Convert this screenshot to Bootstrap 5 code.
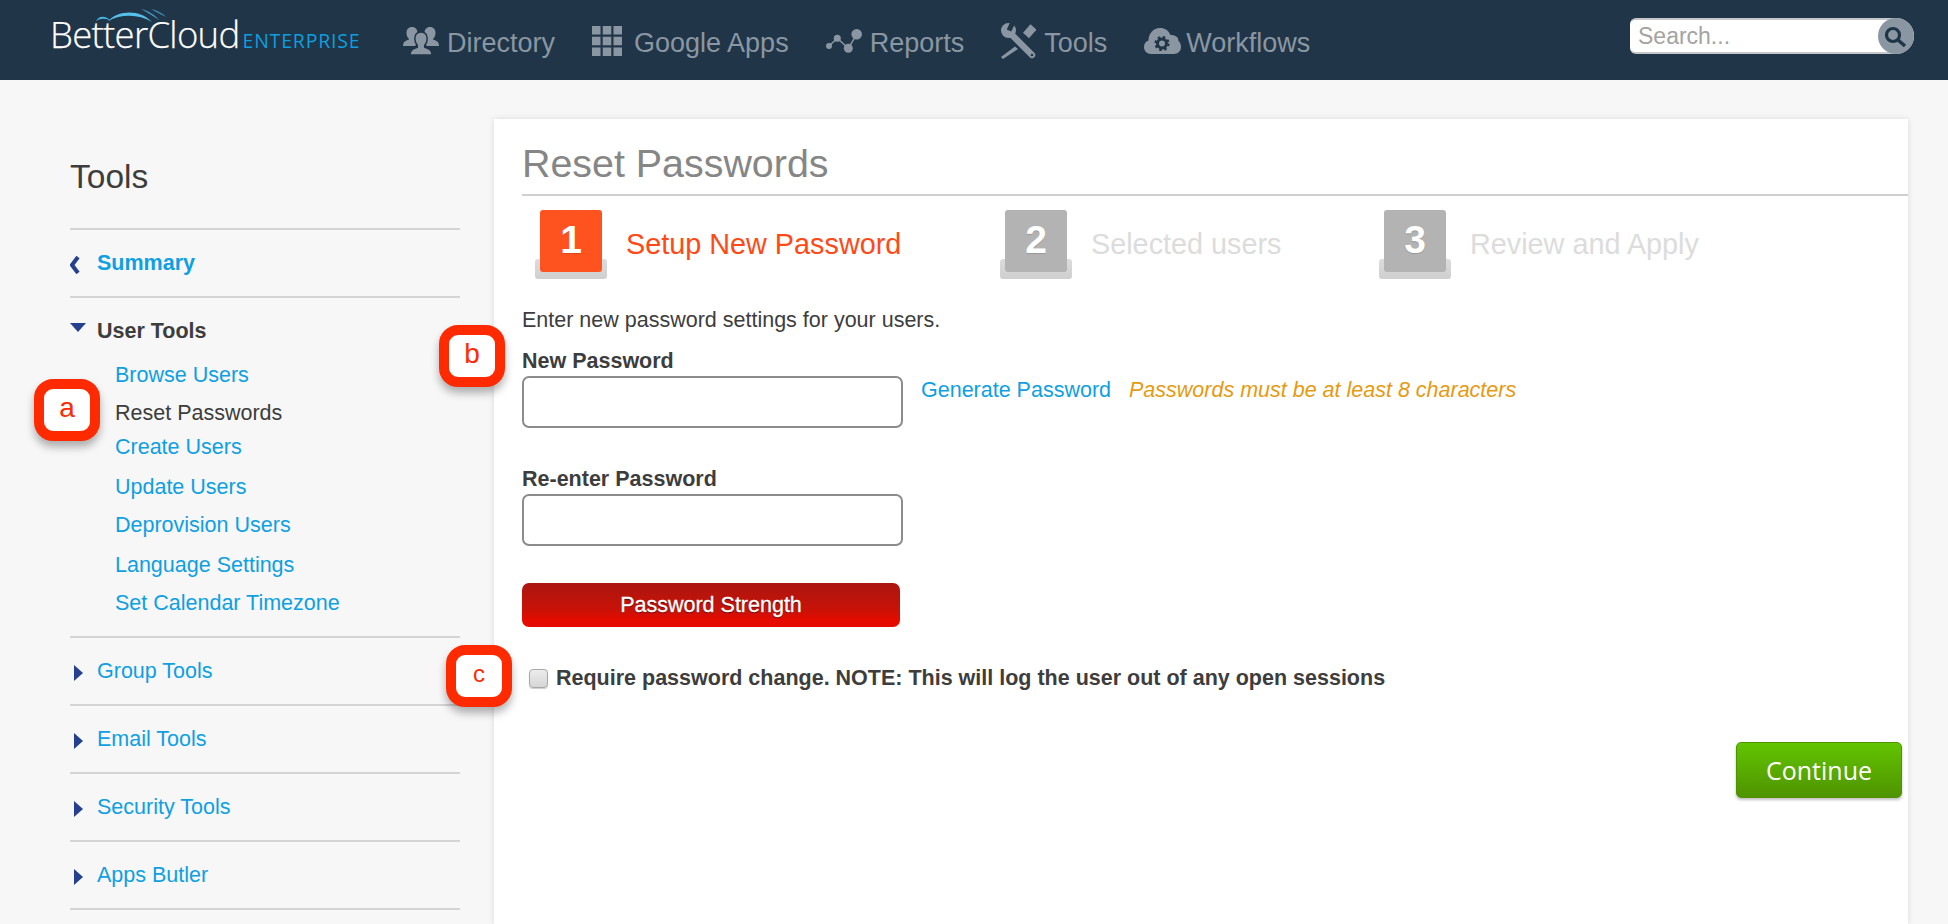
<!DOCTYPE html>
<html lang="en">
<head>
<meta charset="utf-8">
<title>Reset Passwords</title>
<link rel="stylesheet" href="https://cdn.jsdelivr.net/npm/bootstrap@5.3.0/dist/css/bootstrap.min.css">
<style>
html,body{height:924px;overflow:hidden}
body{background:#f7f7f7;font-family:"Liberation Sans",Arial,sans-serif;color:#3d3d3d;font-size:21.5px}
a{text-decoration:none;color:#0f9fe3}
.topbar{height:80px;background:#203548;padding:0 34px 0 50px}
.brand{width:353px;height:80px;position:relative;padding-top:11px;line-height:1;flex:none;white-space:nowrap}
.brand-main{font-family:"Open Sans",sans-serif;font-weight:300;font-size:36.5px;color:#fff;letter-spacing:-.7px;line-height:46px;-webkit-text-stroke:.25px #fff}
.brand-sub{font-family:"Open Sans",sans-serif;font-weight:400;font-size:19.5px;color:#0d9fdf;letter-spacing:.8px;margin-left:3px}
.swoosh{position:absolute;left:45px;top:8px}
.menu-item{color:#8a97a3;font-size:27px;line-height:80px;margin-right:37px;padding-top:5px}
.menu-item:hover{color:#8a97a3}
.menu-item svg{margin-top:-3px;flex:none}
.gap-a{margin-right:8px}
.gap-b{margin-right:12px}
.gap-c{margin-right:7px}
.gap-d{margin-right:5px}
.finder{width:284px;height:36px;background:#fff;border-top:2px solid #c4c6c8;border-bottom:2px solid #c4c6c8;border-radius:6px 18px 18px 6px;position:relative;margin-top:-8px}
.finder input{border:0;outline:0;background:none;width:240px;height:32px;font-size:23px;padding:0 0 0 8px;color:#999;font-family:"Liberation Sans",Arial,sans-serif}
.finder input::placeholder{color:#a3a3a3;opacity:1}
.finder-btn{position:absolute;right:0;top:-2px;width:36px;height:36px;border-radius:50%;background:#8a97a3}
.page-area{padding:39px 40px 0 70px}
.sidenav{width:390px;flex:none;margin-right:34px}
.sidenav-title{font-size:33.500px;font-weight:400;height:109px;margin:0;padding-top:38px;line-height:40px;color:#3d3d3d}
.side-group{border-top:2px solid #d4d4d4;margin:0;height:68px;display:flex;align-items:center;padding-top:1px}
.side-group.open{height:340px;display:block;padding-top:20px}
.side-group.tail{height:14px}
.side-caret{width:27px;flex:none;display:inline-block}
.side-head{display:flex;align-items:center;height:26px}
.sub-list{display:flex;flex-direction:column;padding:18px 0 0 45px;margin:0;list-style:none;line-height:26px}
.sub-list li:nth-child(1){margin-bottom:12px}
.sub-list li:nth-child(2){margin-bottom:8px}
.sub-list li:nth-child(3){margin-bottom:14px}
.sub-list li:nth-child(4){margin-bottom:12px}
.sub-list li:nth-child(5){margin-bottom:14px}
.sub-list li:nth-child(6){margin-bottom:12px}
.panel-box{width:1414px;height:805px;flex:none;background:#fff;box-shadow:0 0 6px rgba(0,0,0,.12);padding:0 0 0 28px}
.panel-title{font-size:39.400px;color:#868686;font-weight:400;height:77px;line-height:44px;padding-top:22px;margin:0;border-bottom:2px solid #cfcfcf}
.steps{height:112px;padding-top:14px}
.step{align-items:flex-start}
.step-num{width:72px;height:69px;position:relative;flex:none;margin-left:13px}
.step-face{position:absolute;left:5px;top:0;width:62px;height:62px;border-radius:3px;color:#fff;font-weight:700;font-size:39px;line-height:60px;text-align:center;z-index:1;text-shadow:0 1px 1px rgba(0,0,0,.15)}
.step-base{position:absolute;left:0;bottom:0;width:72px;height:20px;border-radius:3px;background:linear-gradient(#dcdcdc,#cfcfcf)}
.step-text{font-size:28.800px;line-height:32px;margin:18px 0 0 19px}
.step-on .step-face{background:#ff531f}
.step-on .step-text{color:#ff4a17}
.step-off .step-face{background:#b3b3b3}
.step-off .step-text{color:#dcdcdc}
.step-a{width:465px}
.step-b{width:379px}
.intro{margin:0;line-height:24px;height:41px}
.field-label{font-weight:700;line-height:24px;margin:0 0 3px;display:block}
.field{width:381px;height:52px;border:2px solid #8c8c8c;border-radius:7px;background:#fff;flex:none}
.field-row{margin-bottom:39px}
.gen-link{margin-left:18px;line-height:24px;padding-top:2px}
.hint{margin-left:18px;color:#e69a10;font-style:italic;line-height:24px;padding-top:2px}
.strength{width:378px;height:44px;border:0;border-radius:7px;background:linear-gradient(#ab1611,#c81207 60%,#e60b00 85%);color:#fff;font-size:21.500px;text-shadow:0 1px 1px rgba(60,0,0,.8);margin-top:-2px;display:block;-webkit-text-stroke:.3px #fff}
.req{margin-top:39px;padding-left:7px;line-height:24px;font-weight:700}
.req input{appearance:none;width:19px;height:19px;margin:0 8px 0 0;flex:none;background:linear-gradient(#ececec,#d6d6d6);border:1px solid #a8a8a8;border-radius:4px;box-shadow:0 1px 1px rgba(0,0,0,.2)}
.go-row{margin-top:52px;padding-right:6px;width:1386px}
.go-btn{width:166px;height:56px;background:linear-gradient(#62c400,#4f9300);border:1px solid #4f9400;border-radius:5px;color:#fff;font-family:"Open Sans",sans-serif;font-size:25px;line-height:1;box-shadow:0 2px 3px rgba(0,0,0,.25)}
.callout{position:absolute;width:66px;height:62px;background:#fff;border:10px solid #ff2a00;border-radius:19px;color:#ff2a00;font-size:28px;text-align:center;line-height:38px;box-shadow:0 6px 8px rgba(0,0,0,.3);z-index:5}
.call-a{left:34px;top:379px}
.call-b{left:439px;top:325px}
.call-c{left:446px;top:645px;font-size:24px}
</style>
</head>
<body>
<nav class="topbar d-flex align-items-center">
  <div class="brand">
    <svg class="swoosh" width="74" height="16" viewBox="0 0 74 16"><path d="M1 13C4 8 10 7 16 13C11 10 6 10 1 13Z" fill="#46b4e4"/><path d="M13 13C22 3 44 0 57 14C44 6 26 6 13 13Z" fill="#56bfea"/><path d="M46 1C54 3 60 7 64 12C58 8 52 4 46 1Z" fill="#3f9ac8"/><path d="M56 1C62 2 68 5 71 9C65 6 60 4 56 1Z" fill="#3a7fa6"/></svg>
    <span class="brand-main">BetterCloud</span><span class="brand-sub">ENTERPRISE</span>
  </div>
  <a href="#" class="menu-item d-flex align-items-center">
    <svg class="gap-a" width="36" height="28" viewBox="0 0 36 28" fill="#8a97a3"><path d="M9 0c3.500 0 5.500 2.500 5.500 6 0 2.500-1 4.500-2.500 6v1.500l3 2-3 3.500H0c0-4 2-5 6-6.500V12C4.500 10.500 3.500 8.500 3.500 6 3.500 2.500 5.500 0 9 0Z"/><path d="M27 0c-3.500 0-5.500 2.500-5.500 6 0 2.500 1 4.500 2.500 6v1.500l-3 2 3 3.500h12c0-4-2-5-6-6.500V12c1.500-1.500 2.500-3.500 2.500-6C32.500 2.500 30.500 0 27 0Z"/><path d="M18 5c3.900 0 6.200 2.800 6.200 6.800 0 2.700-1 4.900-2.500 6.400v2c5 1.500 7.300 3 7.300 7.800H7c0-4.800 2.300-6.300 7.300-7.800v-2c-1.500-1.500-2.500-3.700-2.500-6.400C11.800 7.800 14.100 5 18 5Z" stroke="#203548" stroke-width="1.500"/></svg>
    Directory</a>
  <a href="#" class="menu-item d-flex align-items-center">
    <svg class="gap-b" width="30" height="30" viewBox="0 0 30 30" fill="#8a97a3"><rect width="8.500" height="8.500"/><rect x="10.750" width="8.500" height="8.500"/><rect x="21.500" width="8.500" height="8.500"/><rect y="10.750" width="8.500" height="8.500"/><rect x="10.750" y="10.750" width="8.500" height="8.500"/><rect x="21.500" y="10.750" width="8.500" height="8.500"/><rect y="21.500" width="8.500" height="8.500"/><rect x="10.750" y="21.500" width="8.500" height="8.500"/><rect x="21.500" y="21.500" width="8.500" height="8.500"/></svg>
    Google Apps</a>
  <a href="#" class="menu-item d-flex align-items-center">
    <svg class="gap-c" width="37" height="25" viewBox="0 0 37 25" fill="#8a97a3"><path d="M3 17 11.300 9.300 22.300 19.300 30.700 5.300" fill="none" stroke="#8a97a3" stroke-width="1.500"/><circle cx="3" cy="17" r="3"/><circle cx="11.300" cy="9.300" r="3.500"/><circle cx="22.300" cy="19.300" r="4.500"/><circle cx="30.700" cy="5.300" r="5.300"/></svg>
    Reports</a>
  <a href="#" class="menu-item d-flex align-items-center">
    <svg class="gap-a" width="35" height="36" viewBox="0 0 35 36"><path d="M32.500 4 25 12.500" stroke="#8a97a3" stroke-width="8" fill="none"/><path d="M14 23.500 17 26 2 36 0 34Z" fill="#8a97a3"/><path d="M8 9 31 32" stroke="#8a97a3" stroke-width="6.500" stroke-linecap="round"/><circle cx="7.500" cy="7.500" r="7.500" fill="#8a97a3"/><path d="M8 7.500 12 -1" stroke="#203548" stroke-width="5"/><circle cx="31" cy="32" r="1.300" fill="#203548"/></svg>
    Tools</a>
  <a href="#" class="menu-item d-flex align-items-center">
    <svg class="gap-d" width="37" height="26" viewBox="0 0 37 26"><path fill="#8a97a3" d="M7 26C3 26 0 23 0 19c0-3 1.500-5.500 4.500-6.500C4.500 5.500 9.500 0 16 0c5 0 8.500 2.500 10.500 7 5.500 0 8 2.500 8 6 1.500 1 2.500 3 2.500 6 0 4-3 7-7 7Z"/><circle cx="18" cy="15.500" r="4.500" fill="none" stroke="#203548" stroke-width="3"/><circle cx="18" cy="15.500" r="6.500" fill="none" stroke="#203548" stroke-width="2.200" stroke-dasharray="2.600 2.500"/></svg>
    Workflows</a>
  <div class="finder ms-auto">
    <input type="text" placeholder="Search...">
    <span class="finder-btn d-flex">
      <svg width="36" height="36" viewBox="0 0 36 36"><circle cx="15" cy="17" r="6.500" fill="none" stroke="#1e3548" stroke-width="3.200"/><path d="M20 22l7 6" stroke="#1e3548" stroke-width="3.500"/></svg>
    </span>
  </div>
</nav>

<div class="page-area d-flex">
  <aside class="sidenav">
    <h2 class="sidenav-title">Tools</h2>
    <div class="side-group">
      <span class="side-caret"><svg width="10" height="18" viewBox="0 0 10 18"><path d="M8 1 2 9l6 8" fill="none" stroke="#24408f" stroke-width="4"/></svg></span>
      <a href="#" class="fw-bold">Summary</a>
    </div>
    <div class="side-group open">
      <div class="side-head"><span class="side-caret"><svg width="16" height="10" viewBox="0 0 16 10" class="mb-2"><path d="M0 0h16L8 9Z" fill="#24408f"/></svg></span><span class="fw-bold">User Tools</span></div>
      <ul class="sub-list">
        <li><a href="#">Browse Users</a></li>
        <li>Reset Passwords</li>
        <li><a href="#">Create Users</a></li>
        <li><a href="#">Update Users</a></li>
        <li><a href="#">Deprovision Users</a></li>
        <li><a href="#">Language Settings</a></li>
        <li><a href="#">Set Calendar Timezone</a></li>
      </ul>
    </div>
    <div class="side-group"><span class="side-caret"><svg class="ms-1" width="9" height="16" viewBox="0 0 9 16"><path d="M0 0l9 8-9 8Z" fill="#24408f"/></svg></span><a href="#">Group Tools</a></div>
    <div class="side-group"><span class="side-caret"><svg class="ms-1" width="9" height="16" viewBox="0 0 9 16"><path d="M0 0l9 8-9 8Z" fill="#24408f"/></svg></span><a href="#">Email Tools</a></div>
    <div class="side-group"><span class="side-caret"><svg class="ms-1" width="9" height="16" viewBox="0 0 9 16"><path d="M0 0l9 8-9 8Z" fill="#24408f"/></svg></span><a href="#">Security Tools</a></div>
    <div class="side-group"><span class="side-caret"><svg class="ms-1" width="9" height="16" viewBox="0 0 9 16"><path d="M0 0l9 8-9 8Z" fill="#24408f"/></svg></span><a href="#">Apps Butler</a></div>
    <div class="side-group tail"></div>
  </aside>

  <main class="panel-box">
    <h1 class="panel-title">Reset Passwords</h1>
    <div class="steps d-flex">
      <div class="step step-a step-on d-flex"><div class="step-num"><span class="step-face">1</span><span class="step-base"></span></div><div class="step-text">Setup New Password</div></div>
      <div class="step step-b step-off d-flex"><div class="step-num"><span class="step-face">2</span><span class="step-base"></span></div><div class="step-text">Selected users</div></div>
      <div class="step step-off d-flex"><div class="step-num"><span class="step-face">3</span><span class="step-base"></span></div><div class="step-text">Review and Apply</div></div>
    </div>
    <p class="intro">Enter new password settings for your users.</p>
    <label class="field-label" for="pw1">New Password</label>
    <div class="field-row d-flex">
      <input id="pw1" class="field" type="password">
      <a href="#" class="gen-link">Generate Password</a>
      <span class="hint">Passwords must be at least 8 characters</span>
    </div>
    <label class="field-label" for="pw2">Re-enter Password</label>
    <div class="field-row d-flex">
      <input id="pw2" class="field" type="password">
    </div>
    <button class="strength" type="button">Password Strength</button>
    <label class="req d-flex align-items-center"><input type="checkbox">Require password change. NOTE: This will log the user out of any open sessions</label>
    <div class="go-row d-flex justify-content-end"><button class="go-btn" type="button">Continue</button></div>
  </main>
</div>
<div class="callout call-a">a</div>
<div class="callout call-b">b</div>
<div class="callout call-c">c</div>
<script src="https://cdn.jsdelivr.net/npm/bootstrap@5.3.0/dist/js/bootstrap.bundle.min.js"></script>
</body>
</html>
